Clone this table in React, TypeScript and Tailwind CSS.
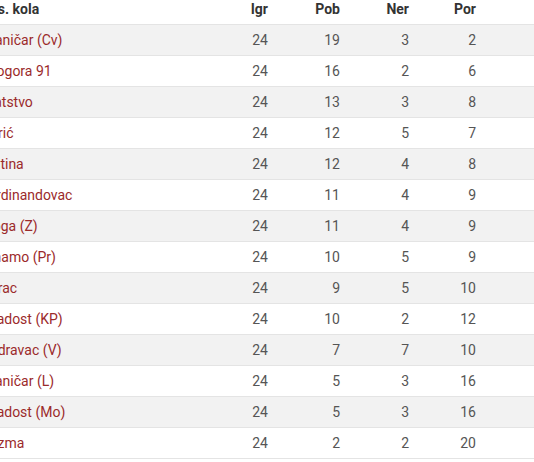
const rows: [string, number, number, number, number][] = [
  ["Graničar (Cv)", 24, 19, 3, 2],
  ["Bilogora 91", 24, 16, 2, 6],
  ["Bratstvo", 24, 13, 3, 8],
  ["Đurić", 24, 12, 5, 7],
  ["Zlatina", 24, 12, 4, 8],
  ["Ferdinandovac", 24, 11, 4, 9],
  ["Sloga (Z)", 24, 11, 4, 9],
  ["Dinamo (Pr)", 24, 10, 5, 9],
  ["Borac", 24, 9, 5, 10],
  ["Mladost (KP)", 24, 10, 2, 12],
  ["Podravac (V)", 24, 7, 7, 10],
  ["Graničar (L)", 24, 5, 3, 16],
  ["Mladost (Mo)", 24, 5, 3, 16],
  ["Kozma", 24, 2, 2, 20],
];

const App = (): JSX.Element => {
  return (
    <div className="h-[462px] w-[534px] overflow-hidden bg-white font-['Roboto',sans-serif] text-[14px]">
      <div className="-ml-[19px] w-[553px]">
        <div className="flex h-[25px] border-b border-[#e4e4e4] font-bold leading-[18px] text-[#333]">
          <div className="w-[246px] pl-0">Pos. kola</div>
          <div className="w-[41px] text-right">Igr</div>
          <div className="w-[72px] text-right">Pob</div>
          <div className="w-[69px] text-right">Ner</div>
          <div className="w-[67px] text-right">Por</div>
        </div>
        {rows.map(([name, igr, pob, ner, por], i) => (
          <div
            key={name}
            className={`flex h-[31px] items-center border-b border-[#e4e4e4] leading-5 text-[#555] ${
              i % 2 === 0 ? "bg-[#f2f2f2]" : "bg-white"
            }`}
          >
            <div className="w-[246px] text-[#9b2a2b]">{name}</div>
            <div className="w-[41px] text-right">{igr}</div>
            <div className="w-[72px] text-right">{pob}</div>
            <div className="w-[69px] text-right">{ner}</div>
            <div className="w-[67px] text-right">{por}</div>
          </div>
        ))}
      </div>
    </div>
  );
};

export default App;
